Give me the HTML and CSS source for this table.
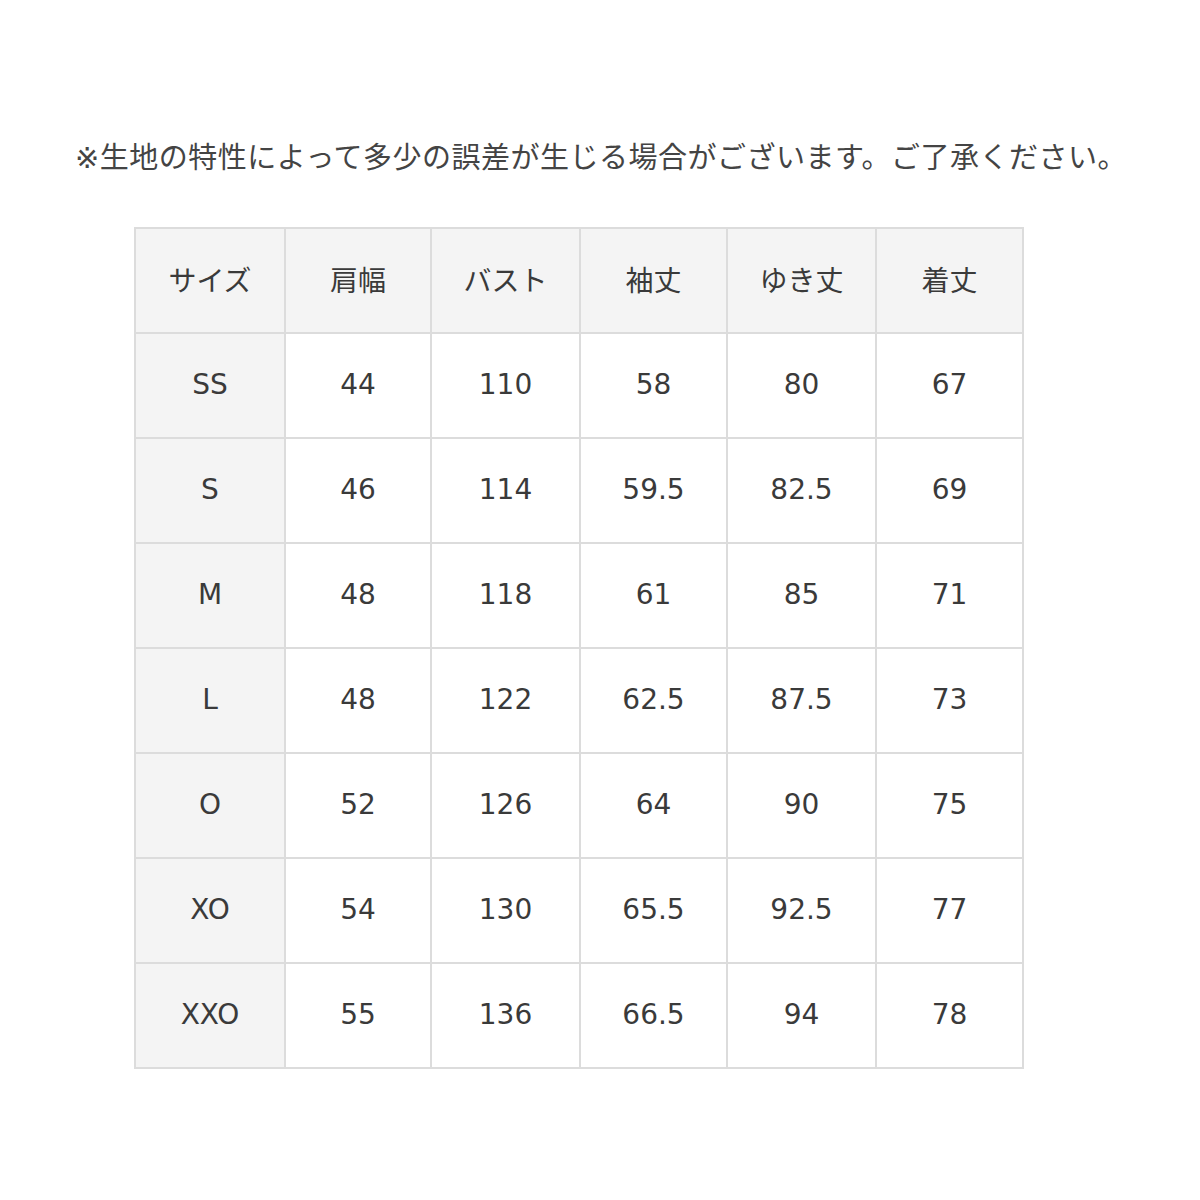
FILE: index.html
```html
<!DOCTYPE html>
<html lang="ja">
<head>
<meta charset="utf-8">
<link rel="stylesheet" href="styles.css">
</head>
<body>
<div class="page">
  <p class="note">※生地の特性によって多少の誤差が生じる場合がございます。ご了承ください。</p>
  <table class="size-table">
    <colgroup>
      <col class="c1"><col class="c2"><col class="c3"><col class="c4"><col class="c5"><col class="c6">
    </colgroup>
    <thead>
      <tr><th class="head">サイズ</th><th>肩幅</th><th>バスト</th><th>袖丈</th><th>ゆき丈</th><th>着丈</th></tr>
    </thead>
    <tbody>
      <tr><th>SS</th><td>44</td><td>110</td><td>58</td><td>80</td><td>67</td></tr>
      <tr><th>S</th><td>46</td><td>114</td><td>59.5</td><td>82.5</td><td>69</td></tr>
      <tr><th>M</th><td>48</td><td>118</td><td>61</td><td>85</td><td>71</td></tr>
      <tr><th>L</th><td>48</td><td>122</td><td>62.5</td><td>87.5</td><td>73</td></tr>
      <tr><th>O</th><td>52</td><td>126</td><td>64</td><td>90</td><td>75</td></tr>
      <tr><th>XO</th><td>54</td><td>130</td><td>65.5</td><td>92.5</td><td>77</td></tr>
      <tr><th>XXO</th><td>55</td><td>136</td><td>66.5</td><td>94</td><td>78</td></tr>
    </tbody>
  </table>
</div>
</body>
</html>
```

FILE: styles.css
```css
html, body {
  margin: 0;
  padding: 0;
  background: #ffffff;
}

.page {
  padding: 137px 0 0 75px;
  font-family: "DejaVu Sans", "Noto Sans CJK JP", sans-serif;
  color: #3a3a3a;
}

.note {
  margin: 0;
  font-size: 29px;
  line-height: 43px;
  color: #444444;
  letter-spacing: 0.5px;
  white-space: nowrap;
}

.size-table {
  margin: 47px 0 0 59px;
  border-collapse: collapse;
  table-layout: fixed;
  border: 2px solid #dcdcdc;
}

.c1 { width: 150px; }
.c2 { width: 146px; }
.c3 { width: 149px; }
.c4 { width: 147px; }
.c5 { width: 149px; }
.c6 { width: 147px; }

.size-table th,
.size-table td {
  border: 2px solid #dcdcdc;
  height: 100px;
  padding: 0 0 3px 0;
  text-align: center;
  vertical-align: middle;
  font-size: 28px;
  font-weight: normal;
  color: #3a3a3a;
}

.size-table th {
  background: #f4f4f4;
}

.size-table td {
  background: #ffffff;
}
```
